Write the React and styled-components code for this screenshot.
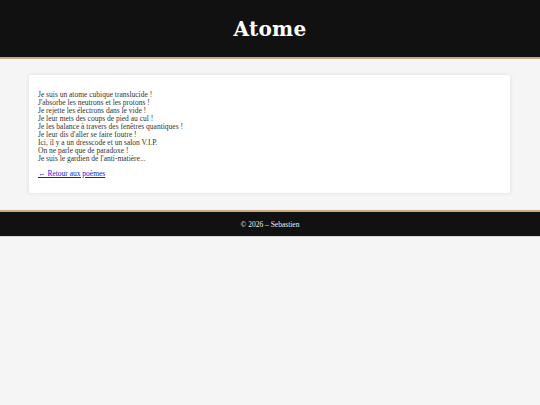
import styled, { createGlobalStyle } from "styled-components";

const GlobalStyle = createGlobalStyle`
  html, body {
    margin: 0;
    padding: 0;
    background: #f5f5f5;
  }
  body {
    font-family: "Liberation Serif", "Times New Roman", serif;
    color: #333;
  }
`;

const lines = [
  "Je suis un atome cubique translucide !",
  "J'absorbe les neutrons et les protons !",
  "Je rejette les électrons dans le vide !",
  "Je leur mets des coups de pied au cul !",
  "Je les balance à travers des fenêtres quantiques !",
  "Je leur dis d'aller se faire foutre !",
  "Ici, il y a un dresscode et un salon V.I.P.",
  "On ne parle que de paradoxe !",
  "Je suis le gardien de l'anti-matière...",
];

const App = () => {
  return (
    <Page>
      <GlobalStyle />
      <Header>
        <Title>Atome</Title>
      </Header>
      <Main>
        <Card>
          <Poem>
            {lines.map((l, i) => (
              <span key={i}>
                {l}
                <br />
              </span>
            ))}
          </Poem>
          <BackLink href="#">← Retour aux poèmes</BackLink>
        </Card>
      </Main>
      <Footer>© 2026 – Sebastien</Footer>
    </Page>
  );
};

const Page = styled.div`
  display: flex;
  flex-direction: column;
`;

const Header = styled.header`
  height: 57px;
  background: #111;
  border-bottom: 2px solid #c9ab7f;
  display: flex;
  align-items: center;
  justify-content: center;
`;

const Title = styled.h1`
  margin: 0;
  color: #fff;
  font-family: "DejaVu Serif", Georgia, serif;
  font-weight: bold;
  font-size: 20px;
  letter-spacing: 0.3px;
`;

const Main = styled.main`
  padding: 16px 30px 17px 29px;
`;

const Card = styled.div`
  background: #fff;
  border-radius: 2px;
  box-shadow: 0 0 4px rgba(0, 0, 0, 0.1);
  padding: 16px 9px 15px 9px;
  font-size: 7.5px;
  line-height: 8px;
`;

const Poem = styled.p`
  margin: 0 0 7px;
`;

const BackLink = styled.a`
  color: #1a1aee;
`;

const Footer = styled.footer`
  height: 24px;
  background: #111;
  border-top: 2px solid #c9ab7f;
  border-bottom: 1px solid #d8d8d8;
  color: #eee;
  font-size: 7.5px;
  display: flex;
  align-items: center;
  justify-content: center;
`;

export default App;
